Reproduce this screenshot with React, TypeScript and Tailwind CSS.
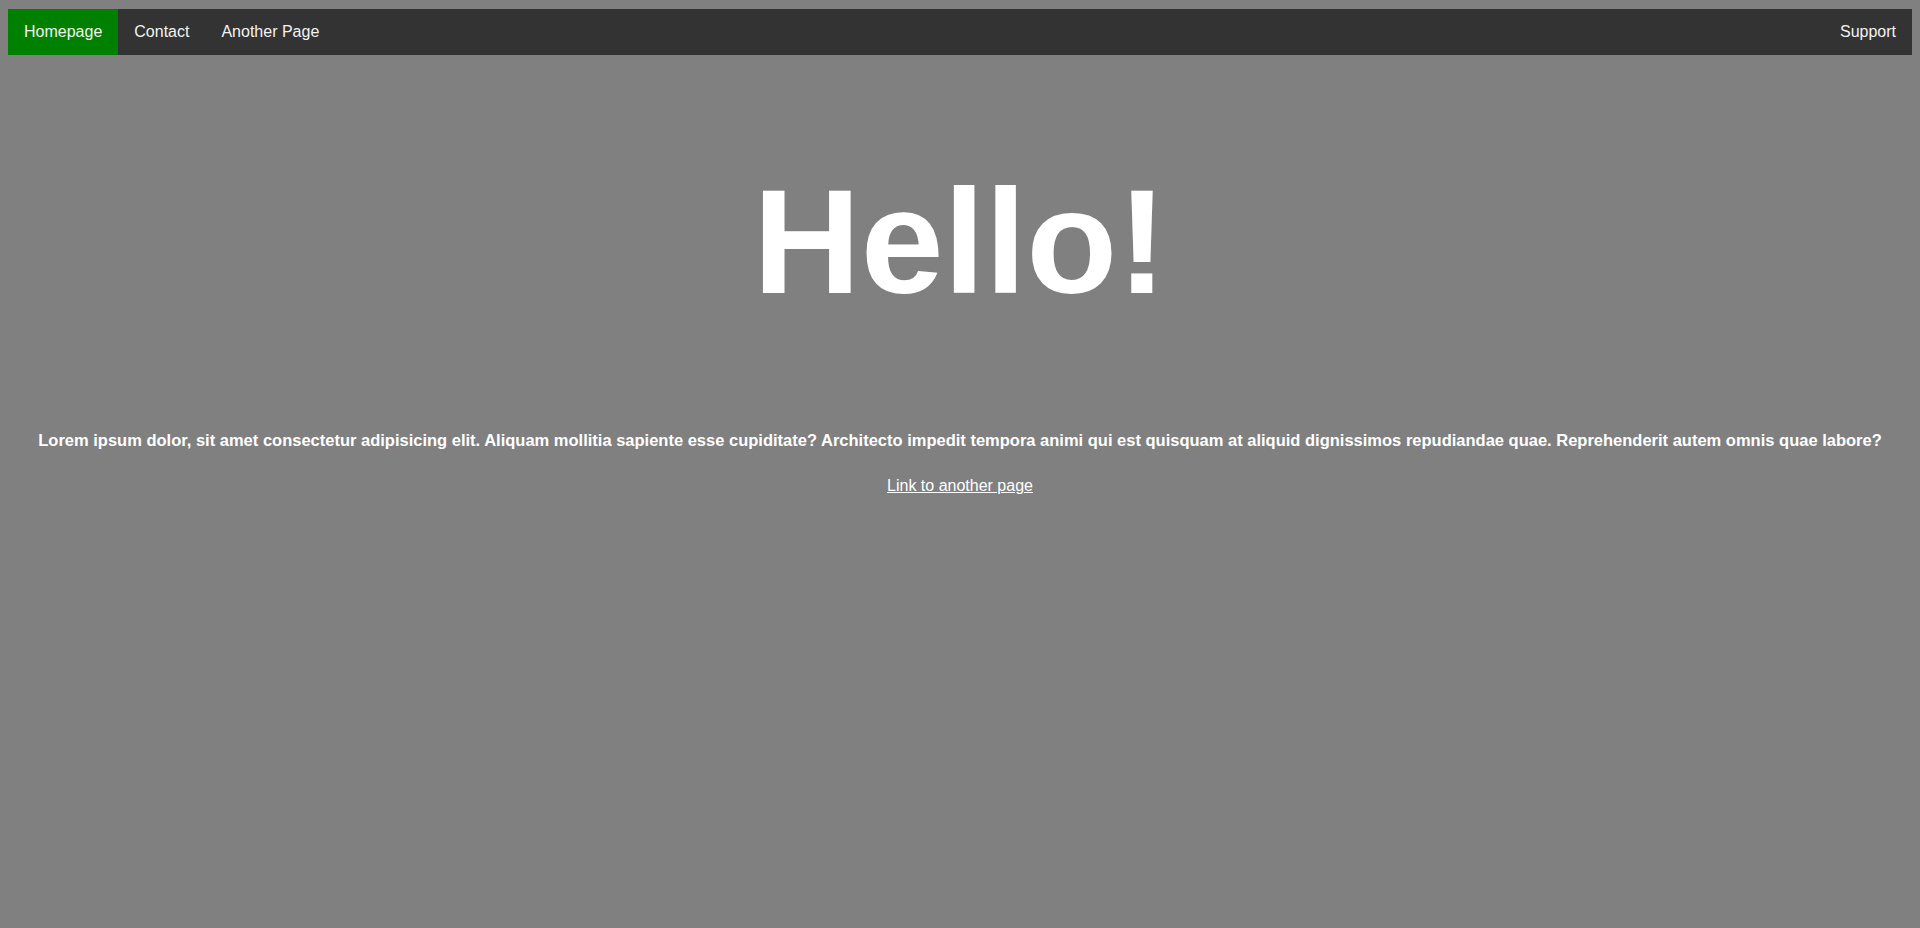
export default function App() {
  const links = ['Homepage', 'Contact', 'Another Page']

  return (
    <div className="min-h-screen bg-[#808080] px-2 pt-[9px] font-['Liberation_Sans',Arial,sans-serif] text-white">
      <nav className="flex h-[46px] bg-[#333333]">
        {links.map((label, i) => (
          <a
            key={label}
            href="#"
            className={`flex items-center px-4 text-base leading-[18px] text-[#f2f2f2] ${
              i === 0 ? 'bg-[#008000]' : ''
            }`}
          >
            {label}
          </a>
        ))}
        <a
          href="#"
          className="ml-auto flex items-center px-4 text-base leading-[18px] text-[#f2f2f2]"
        >
          Support
        </a>
      </nav>

      <main className="text-center">
        <h1 className="mt-[112px] text-[149px] font-bold leading-[150px]">
          Hello!
        </h1>
        <p className="mt-[111px] text-[16.5px] font-bold leading-6">
          Lorem ipsum dolor, sit amet consectetur adipisicing elit. Aliquam
          mollitia sapiente esse cupiditate? Architecto impedit tempora animi qui
          est quisquam at aliquid dignissimos repudiandae quae. Reprehenderit
          autem omnis quae labore?
        </p>
        <p className="mt-[22px] text-base leading-6">
          <a href="#" className="underline">
            Link to another page
          </a>
        </p>
      </main>
    </div>
  )
}
